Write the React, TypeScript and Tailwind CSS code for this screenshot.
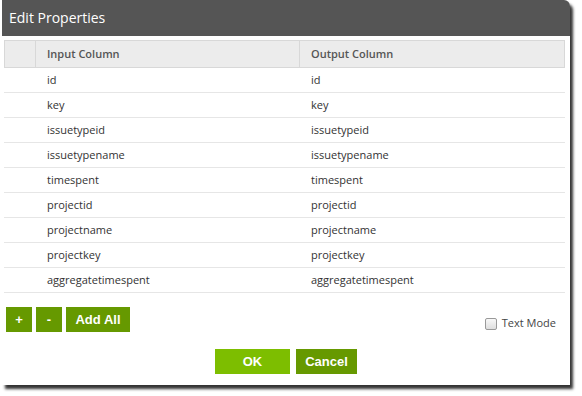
import React from 'react';

const rows = [
  'id',
  'key',
  'issuetypeid',
  'issuetypename',
  'timespent',
  'projectid',
  'projectname',
  'projectkey',
  'aggregatetimespent',
];

// Edit Properties dialog with column mapping table.
const App: React.FC = () => {
  return (
    <div className="w-[582px] h-[396px] bg-white overflow-hidden font-['Open_Sans',sans-serif]">
      <div className="ml-[2px] w-[568px] h-[385px] bg-white flex flex-col shadow-[3px_4px_3px_rgba(0,0,0,0.8)] rounded-tr-[6px]">
        <div className="h-[36px] bg-[#555555] text-white text-[14px] flex items-center pl-[7px] pb-[2px] rounded-tr-[6px]">
          Edit Properties
        </div>

        <div className="pl-[2px] pt-[4px]">
          <div className="w-[561px] text-[11px] text-[#333]">
            <div className="grid grid-cols-[31px_264px_266px] h-[28px] bg-[#ececec] border border-[#d8d8d8] text-[#555] font-semibold">
              <div className="border-r border-[#d8d8d8]"></div>
              <div className="border-r border-[#d8d8d8] flex items-center pl-[11px]">Input Column</div>
              <div className="flex items-center pl-[11px]">Output Column</div>
            </div>
            {rows.map((r) => (
              <div key={r} className="grid grid-cols-[31px_264px_266px] h-[25px] border-b border-[#e6e6e6]">
                <div></div>
                <div className="flex items-center pl-[12px]">{r}</div>
                <div className="flex items-center pl-[12px]">{r}</div>
              </div>
            ))}
          </div>
        </div>

        <div className="flex items-center justify-between pl-[4px] pr-[14px] mt-[14px]">
          <div className="flex gap-[4px] font-['Liberation_Sans',sans-serif] font-bold text-white text-[13px]">
            <button className="w-[26px] h-[25px] bg-[#669900] flex items-center justify-center">+</button>
            <button className="w-[26px] h-[25px] bg-[#669900] flex items-center justify-center">-</button>
            <button className="w-[64px] h-[25px] bg-[#669900] flex items-center justify-center">Add All</button>
          </div>
          <label className="flex items-center gap-[5px] text-[11px] text-[#444] mt-[8px]">
            <span className="w-[12px] h-[12px] border border-[#999] rounded-[2px] bg-gradient-to-b from-[#f8f8f8] to-[#dedede]"></span>
            Text Mode
          </label>
        </div>

        <div className="flex justify-center gap-[6px] mt-[17px] font-['Liberation_Sans',sans-serif] font-bold text-white text-[13px]">
          <button className="w-[75px] h-[25px] bg-[#7dbe00] flex items-center justify-center">OK</button>
          <button className="w-[61px] h-[25px] bg-[#669900] flex items-center justify-center">Cancel</button>
        </div>
      </div>
    </div>
  );
};

export default App;
